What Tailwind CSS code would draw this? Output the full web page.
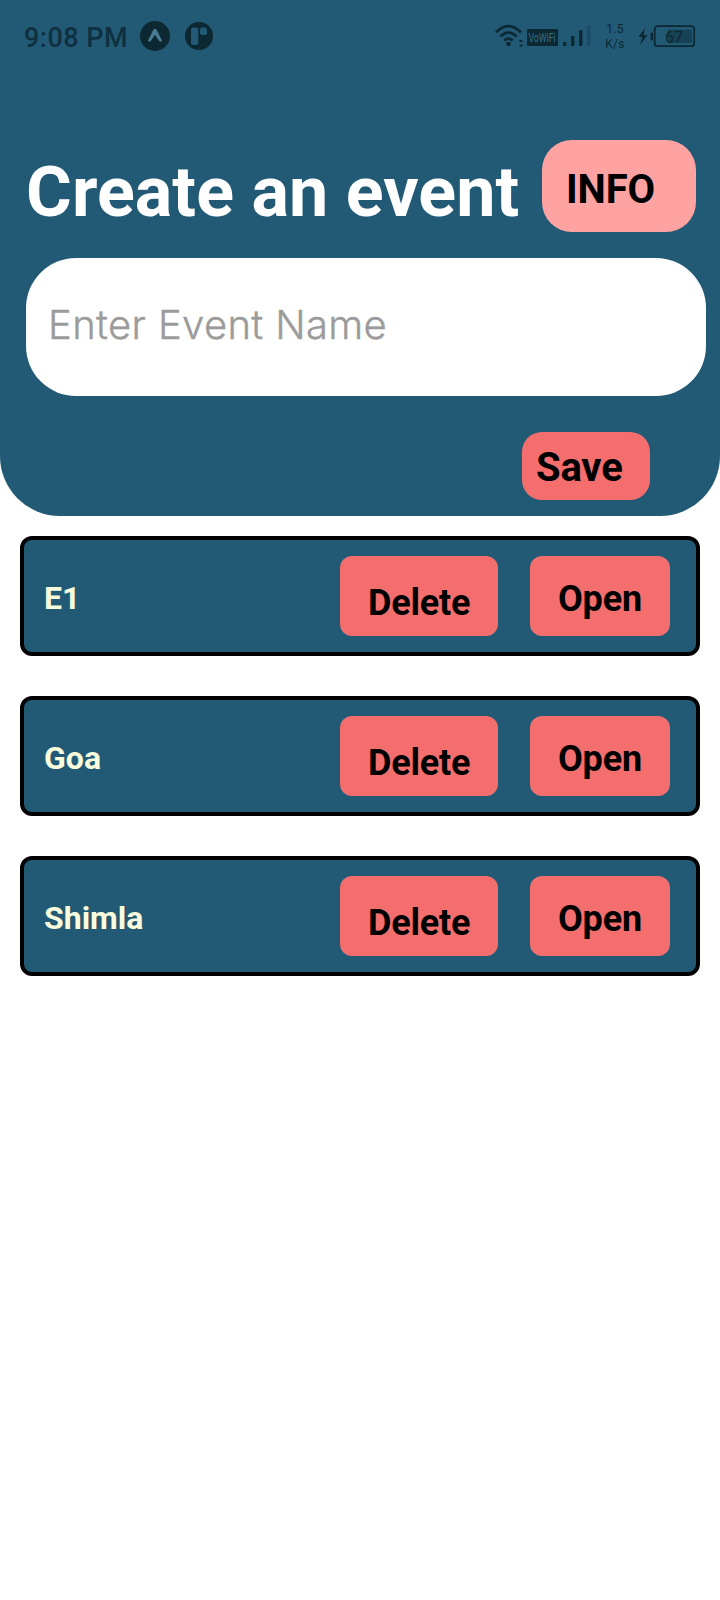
<!DOCTYPE html>
<html lang="en">
<head>
<meta charset="utf-8">
<title>Create an event</title>
<script src="https://cdn.jsdelivr.net/npm/@tailwindcss/browser@4"></script>
</head>
<body class="min-h-[1600px] w-[720px] bg-white font-['Roboto',sans-serif] text-black">
<header class="h-[516px] rounded-b-[60px] bg-[#225a76]">
  <div class="flex h-[72px] items-center pl-6 text-[#0c2833]">
    <span class="w-[116px] pt-[3px] text-[27px] leading-[72px] font-medium tracking-[.5px] whitespace-nowrap text-[#0f303f]">9:08 PM</span>
    <svg class="h-[30px] w-[30px]" viewBox="0 0 30 30"><circle cx="15" cy="15" r="15" fill="currentColor"/><path d="M8 19.500 L13.200 9 Q15 6.500 16.800 9 L22 19.500 Q21 22 19 19.800 L15 13.800 L11 19.800 Q9 22 8 19.500Z" fill="#4a7a90"/></svg>
    <svg class="ml-[15px] h-7 w-7" viewBox="0 0 28 28"><circle cx="14" cy="14" r="14" fill="currentColor"/><rect x="6" y="5.500" width="7.300" height="17.500" rx="2.500" fill="#225a76"/><rect x="15" y="5.500" width="7" height="7.500" rx="2.500" fill="#225a76"/></svg>
    <svg class="ml-[282px] h-6 w-7" viewBox="0 0 28 24" fill="none" stroke="currentColor" stroke-width="2.6"><path d="M1 8.200 Q13.500 -4 26 8.200M5.300 12.500 Q13.500 4.500 21.700 12.500M9.300 16.500 Q13.500 12.700 17.700 16.500"/><circle cx="13.500" cy="20" r="2.300" fill="currentColor" stroke="none"/><path d="M24.500 17h3M24.500 21.500h3" stroke-width="2"/></svg>
    <svg class="mt-0.5 ml-1 h-[17px] w-[31px] overflow-visible" viewBox="0 0 31 17"><rect width="31" height="17" rx="1" fill="currentColor"/><text transform="translate(1.500 13) scale(.7 1)" font-size="12.500" fill="#3a708a" font-family="Roboto">VoWiFi</text></svg>
    <svg class="ml-[5px] h-6 w-7" viewBox="0 0 28 24" fill="currentColor"><rect x="0" y="18" width="3.500" height="4" rx="1"/><rect x="8" y="12" width="3.500" height="10" rx="1"/><rect x="16" y="6" width="3.500" height="16" rx="1"/><rect x="24" y="1" width="3.500" height="21" rx="1" opacity=".25"/></svg>
    <span class="mt-0.5 ml-[14px] w-5 text-center text-[12px] leading-[15px] tracking-[.3px] whitespace-nowrap"><span class="block">1.5</span><span class="block">K/s</span></span>
    <svg class="ml-[15px] h-6 w-14 overflow-visible" viewBox="0 0 56 24"><path d="M5 4 L-1.500 13 h4 L0 21 L7.500 11 H3.500Z" fill="currentColor"/><rect x="10.500" y="8.500" width="2.500" height="8" rx="1" fill="currentColor"/><rect x="14.700" y="2.200" width="39.500" height="20" rx="3" fill="none" stroke="currentColor" stroke-width="1.800"/><rect x="28" y="5.500" width="24" height="13.500" rx="1" fill="currentColor" opacity=".5"/><text x="25" y="18.500" font-size="16" textLength="18" fill="currentColor" font-family="Roboto">67</text></svg>
  </div>
  <div class="flex h-[186px] items-start pt-[68px] pl-[26px]">
    <h1 class="w-[516px] pt-[12px] text-[70px] leading-[80px] font-bold tracking-[.08px] whitespace-nowrap text-white">Create an event</h1>
    <button class="flex h-[92px] w-[154px] items-start rounded-[30px] bg-[#ffa2a2] pt-[30px] pl-6 text-[40px] leading-[40px] font-bold tracking-[-.1px]">INFO</button>
  </div>
  <div class="ml-[26px] flex h-[138px] w-[680px] items-start rounded-[50px] bg-white pt-[47px] pl-[22px]">
    <span class="font-['Inter',sans-serif] text-[40px] leading-[40px] font-light tracking-[.36px] whitespace-nowrap text-[#9b9b9b] [-webkit-text-stroke:.4px_#9b9b9b]">Enter Event Name</span>
  </div>
  <div class="flex justify-end pt-9 pr-[70px]">
    <button class="flex h-[68px] w-32 items-start rounded-[20px] bg-[#f56e6e] pt-[16px] pl-[14px] text-[40px] leading-[40px] font-bold tracking-[-.2px]">Save</button>
  </div>
</header>
<main class="flex flex-col gap-10 px-5 pt-5">
  <section class="flex h-[120px] items-start rounded-xl border-4 border-black bg-[#225a76] pt-4 pl-5">
    <span class="w-[296px] pt-[22px] text-[32px] leading-[40px] font-bold text-[#f8fbdc]">E1</span>
    <button class="flex h-20 w-[158px] items-start rounded-xl bg-[#f56e6e] pt-[27px] pl-7 text-[36px] leading-[40px] font-bold tracking-[-.2px]">Delete</button>
    <button class="ml-8 flex h-20 w-[140px] items-start rounded-xl bg-[#f56e6e] pt-[23px] pl-7 text-[36px] leading-[40px] font-bold tracking-[-.2px]">Open</button>
  </section>
  <section class="flex h-[120px] items-start rounded-xl border-4 border-black bg-[#225a76] pt-4 pl-5">
    <span class="w-[296px] pt-[22px] text-[32px] leading-[40px] font-bold text-[#f8fbdc]">Goa</span>
    <button class="flex h-20 w-[158px] items-start rounded-xl bg-[#f56e6e] pt-[27px] pl-7 text-[36px] leading-[40px] font-bold tracking-[-.2px]">Delete</button>
    <button class="ml-8 flex h-20 w-[140px] items-start rounded-xl bg-[#f56e6e] pt-[23px] pl-7 text-[36px] leading-[40px] font-bold tracking-[-.2px]">Open</button>
  </section>
  <section class="flex h-[120px] items-start rounded-xl border-4 border-black bg-[#225a76] pt-4 pl-5">
    <span class="w-[296px] pt-[22px] text-[32px] leading-[40px] font-bold text-[#f8fbdc]">Shimla</span>
    <button class="flex h-20 w-[158px] items-start rounded-xl bg-[#f56e6e] pt-[27px] pl-7 text-[36px] leading-[40px] font-bold tracking-[-.2px]">Delete</button>
    <button class="ml-8 flex h-20 w-[140px] items-start rounded-xl bg-[#f56e6e] pt-[23px] pl-7 text-[36px] leading-[40px] font-bold tracking-[-.2px]">Open</button>
  </section>
</main>
</body>
</html>
